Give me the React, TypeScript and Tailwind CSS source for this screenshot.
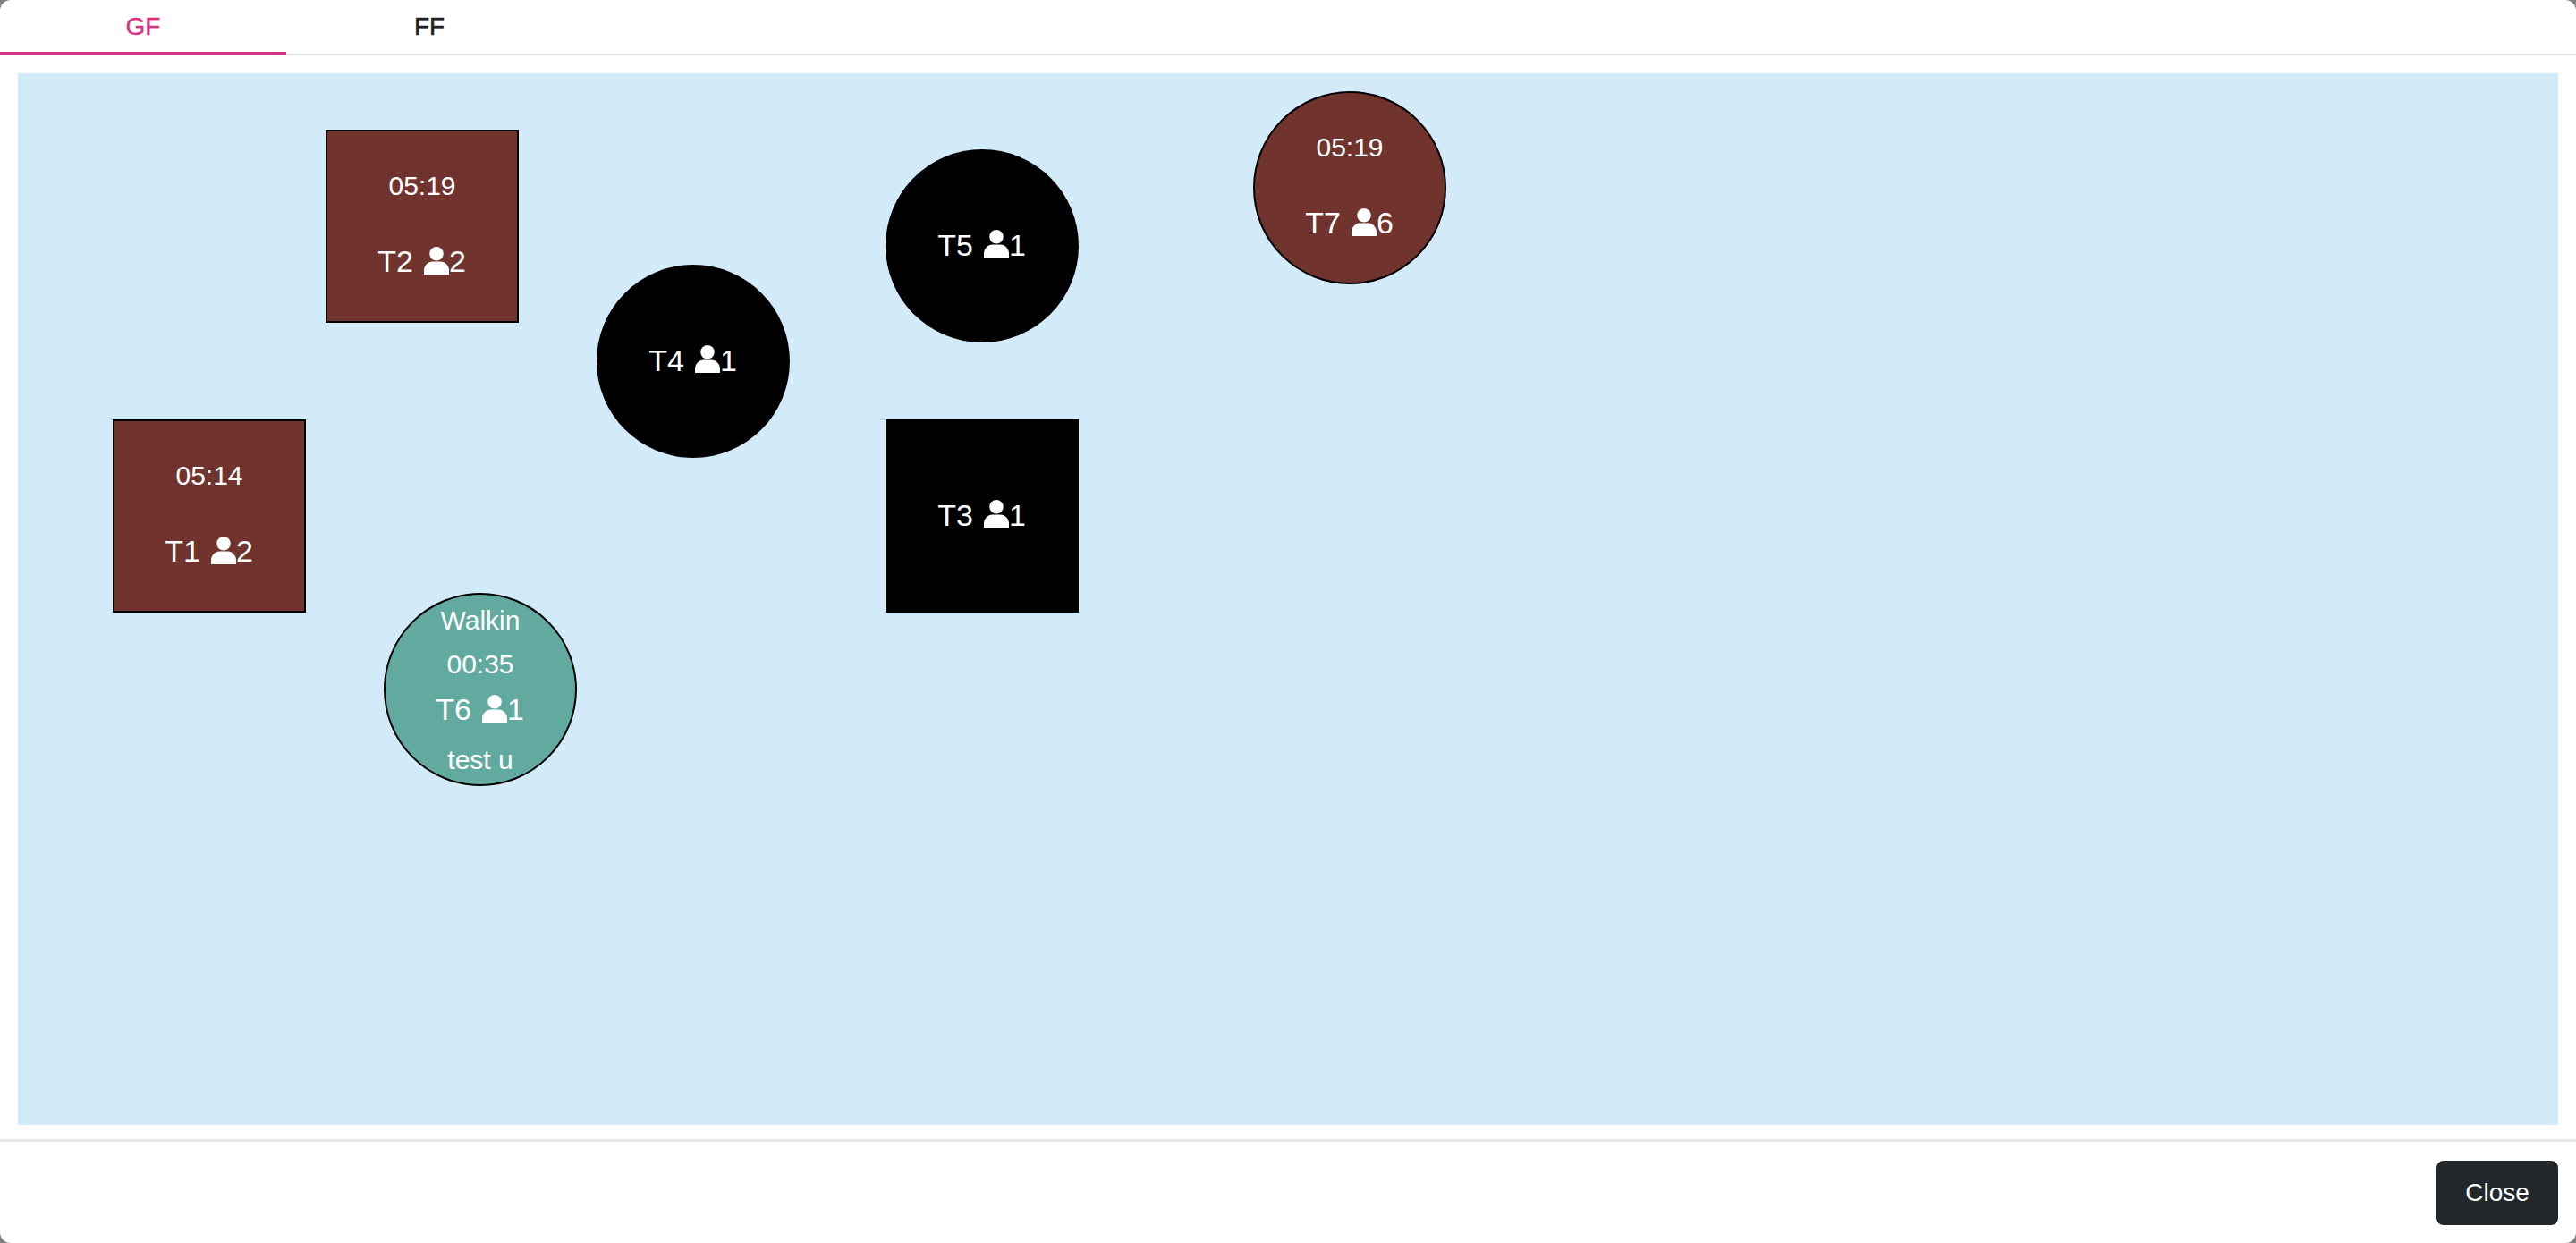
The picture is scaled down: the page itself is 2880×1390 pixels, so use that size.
type TableItem = {
  name: string;
  guests: number;
  shape: "square" | "round";
  status: "free" | "busy";
  left: string;
  top: string;
  time?: string;
};

const TABLES: TableItem[] = [
  { name: "T2", guests: 2, shape: "square", status: "busy", left: "left-[344px]", top: "top-[63px]", time: "05:19" },
  { name: "T4", guests: 1, shape: "round", status: "free", left: "left-[647px]", top: "top-[214px]" },
  { name: "T5", guests: 1, shape: "round", status: "free", left: "left-[970px]", top: "top-[85px]" },
  { name: "T7", guests: 6, shape: "round", status: "busy", left: "left-[1381px]", top: "top-[20px]", time: "05:19" },
  { name: "T1", guests: 2, shape: "square", status: "busy", left: "left-[106px]", top: "top-[387px]", time: "05:14" },
  { name: "T3", guests: 1, shape: "square", status: "free", left: "left-[970px]", top: "top-[387px]" },
];

function PersonIcon() {
  return (
    <svg viewBox="0 0 28 31" fill="currentColor" className="mb-[3px] ml-[12px] h-[31px] w-[28px]" aria-hidden="true">
      <circle cx="14" cy="7.75" r="7.75" />
      <path d="M0 31v-4.5C0 21 4.5 16.5 9.5 16.5h9c5 0 9.5 4.5 9.5 10V31z" />
    </svg>
  );
}

function TableLabel({ name, guests }: { name: string; guests: number }) {
  return (
    <div className="flex h-[54px] items-center justify-center pr-[1px] text-[34px]">
      <span>{name}</span>
      <PersonIcon />
      <span>{guests}</span>
    </div>
  );
}

function Table({ item }: { item: TableItem }) {
  return (
    <div
      className={[
        "absolute flex h-[216px] w-[216px] flex-col items-center justify-center pb-[2px] text-white",
        item.left,
        item.top,
        item.shape === "round" ? "rounded-full" : "",
        item.status === "busy" ? "border-2 border-black bg-[#71332e]" : "bg-black",
      ].join(" ")}
    >
      {item.time && <div className="mb-[36px] h-[45px] text-[30px] leading-[45px]">{item.time}</div>}
      <TableLabel name={item.name} guests={item.guests} />
    </div>
  );
}

export default function App() {
  return (
    <div className="h-[1390px] bg-[#808080] font-['Liberation_Sans',Arial,sans-serif] text-[#212121]">
      <div className="flex h-full flex-col rounded-[12px] bg-white">
        {/* tabs */}
        <div className="flex h-[62px] border-b-2 border-[#dee2e6] text-[28px]">
          <div className="flex h-[62px] w-[320px] items-center justify-center border-b-4 border-[#d63384] pt-[1px] text-[#d63384] [-webkit-text-stroke:0.4px_#d63384]">
            GF
          </div>
          <div className="flex h-[60px] w-[320px] items-center justify-center pb-[1px] [-webkit-text-stroke:0.5px_#212121]">
            FF
          </div>
        </div>

        {/* floor */}
        <div className="relative mx-[20px] mt-[20px] h-[1176px] bg-[#d3eaf9]">
          {TABLES.map((t) => (
            <Table key={t.name} item={t} />
          ))}
          <div className="absolute left-[409px] top-[581px] flex h-[216px] w-[216px] flex-col items-center justify-center rounded-full border-2 border-black bg-[#62aa9f] text-[30px] leading-[45px] text-white">
            <div className="h-[45px]">Walkin</div>
            <div className="mt-[4px] h-[45px]">00:35</div>
            <div className="mt-[2px]">
              <TableLabel name="T6" guests={1} />
            </div>
            <div className="mt-[6px] h-[45px]">test u</div>
          </div>
        </div>

        {/* footer */}
        <div className="mt-[16px] flex flex-1 items-center justify-end border-t-[3px] border-[#e6e8ea] px-[20px]">
          <button className="h-[72px] w-[136px] rounded-[8px] bg-[#21272a] text-[28px] text-white">Close</button>
        </div>
      </div>
    </div>
  );
}
